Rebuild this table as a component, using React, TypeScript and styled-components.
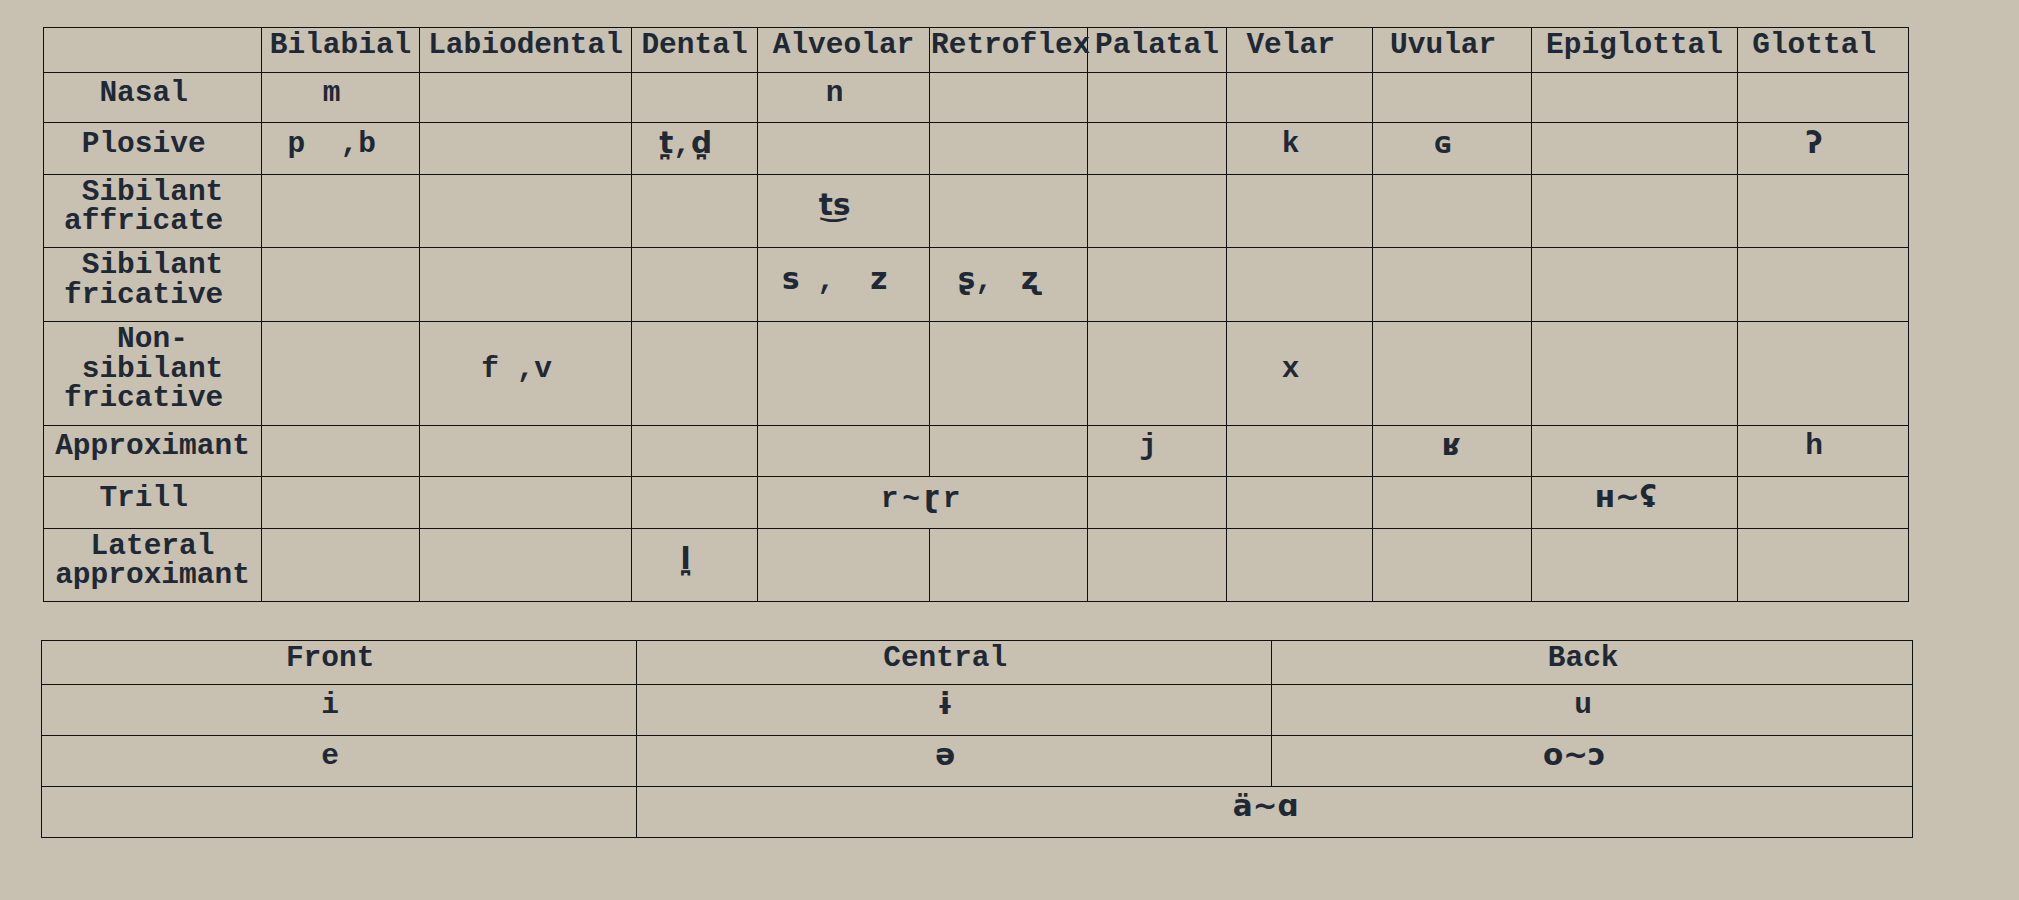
import React from "react";
import styled, { createGlobalStyle } from "styled-components";

const GlobalStyle = createGlobalStyle`
  html, body {
    margin: 0;
    padding: 0;
    background: #c8c0b0;
  }
  body {
    font-family: "Liberation Mono", "Courier New", monospace;
    color: #1e2935;
  }
`;

const Page = styled.main`
  display: flex;
  flex-direction: column;
  align-items: flex-start;
  gap: 38px;
  padding-top: 27px;
  min-height: 900px;
  box-sizing: border-box;
`;

const Table = styled.table<{ $w: number; $x: number }>`
  border-collapse: collapse;
  table-layout: fixed;
  width: ${(p) => p.$w}px;
  margin-left: ${(p) => p.$x}px;
  font-family: "Liberation Mono", "Courier New", monospace;
  font-weight: bold;
  font-size: 29.5px;
  line-height: 29.5px;
  color: #1e2935;
`;

const Row = styled.tr<{ $h: number }>`
  height: ${(p) => p.$h}px;
`;

const Cell = styled.td`
  border: 1px solid #111;
  padding: 2.5px 1px 10.5px;
  text-align: center;
  vertical-align: middle;
  white-space: nowrap;
  font-weight: bold;
`;

const Sans = styled.span`
  font-family: "DejaVu Sans", "Noto Sans", sans-serif;
  font-weight: bold;
`;

const Spaced = styled.span`
  letter-spacing: 4px;
`;

const NB = "\u00a0";

type Spec = { c?: React.ReactNode; span?: number };

const consonantCols = [218, 158, 212, 126, 172, 158, 139, 146, 159, 206, 171];
const places = [
  "Bilabial",
  "Labiodental",
  "Dental",
  "Alveolar",
  "Retroflex",
  "Palatal",
  "Velar" + NB,
  "Uvular" + NB,
  "Epiglottal",
  "Glottal" + NB,
];

const E: Spec = {};

const consonantRows: { label: React.ReactNode; h: number; cells: Spec[] }[] = [
  {
    label: <>Nasal{NB}</>,
    h: 50,
    cells: [{ c: "m" + NB }, E, E, { c: "n" + NB }, E, E, E, E, E, E],
  },
  {
    label: <>Plosive{NB}</>,
    h: 52,
    cells: [
      { c: `p${NB}${NB},b${NB}` },
      E,
      {
        c: (
          <>
            <Sans>t̪</Sans>,<Sans>d̪</Sans>
            {NB}
          </>
        ),
      },
      E,
      E,
      E,
      { c: "k" + NB },
      { c: <><Sans>ɢ</Sans>{NB}</> },
      E,
      { c: <><Sans>ʔ</Sans>{NB}</> },
    ],
  },
  {
    label: (
      <>
        Sibilant
        <br />
        affricate{NB}
      </>
    ),
    h: 73,
    cells: [E, E, E, { c: <><Sans>t͜s</Sans>{NB}</> }, E, E, E, E, E, E],
  },
  {
    label: (
      <>
        Sibilant
        <br />
        fricative{NB}
      </>
    ),
    h: 74,
    cells: [
      E,
      E,
      E,
      { c: <><Sans>s</Sans>{NB},{NB}{NB}<Sans>z</Sans>{NB}</> },
      { c: <><Sans>ʂ</Sans>,{NB}<Sans>{NB}ʐ</Sans>{NB}</> },
      E,
      E,
      E,
      E,
      E,
    ],
  },
  {
    label: (
      <>
        Non-
        <br />
        sibilant
        <br />
        fricative{NB}
      </>
    ),
    h: 104,
    cells: [E, { c: `f${NB},v${NB}` }, E, E, E, E, { c: "x" + NB }, E, E, E],
  },
  {
    label: <>Approximant</>,
    h: 51,
    cells: [E, E, E, E, E, { c: "j" + NB }, E, { c: <Sans>ʁ</Sans> }, E, { c: "h" + NB }],
  },
  {
    label: <>Trill{NB}</>,
    h: 52,
    cells: [
      E,
      E,
      E,
      {
        c: (
          <Spaced>
            r~<Sans>ɽ</Sans>r
          </Spaced>
        ),
        span: 2,
      },
      E,
      E,
      E,
      { c: <><Sans>ʜ~ʢ</Sans>{NB}</> },
      E,
    ],
  },
  {
    label: (
      <>
        Lateral
        <br />
        approximant
      </>
    ),
    h: 73,
    cells: [E, E, { c: <><Sans>l̪</Sans>{NB}</> }, E, E, E, E, E, E, E],
  },
];

const vowelCols = [595, 635, 641];
const vowelRows: { h: number; cells: Spec[] }[] = [
  { h: 51, cells: [{ c: "i" + NB }, { c: <><Sans>ɨ</Sans>{NB}</> }, { c: "u" + NB }] },
  {
    h: 51,
    cells: [
      { c: "e" + NB },
      { c: <><Sans>ə</Sans>{NB}</> },
      { c: <><Sans>o~ɔ</Sans>{NB}{NB}</> },
    ],
  },
  { h: 51, cells: [E, { c: <><Sans>ä~ɑ</Sans>{NB}</>, span: 2 }] },
];

function renderCells(cells: Spec[]) {
  return cells.map((s, i) => (
    <Cell key={i} colSpan={s.span}>
      {s.c}
    </Cell>
  ));
}

export default function App() {
  return (
    <>
      <GlobalStyle />
      <Page>
        <Table $w={1865} $x={43}>
          <colgroup>
            {consonantCols.map((w, i) => (
              <col key={i} style={{ width: w }} />
            ))}
          </colgroup>
          <thead>
            <Row $h={45}>
              <Cell as="th" />
              {places.map((p) => (
                <Cell as="th" key={p}>
                  {p}
                </Cell>
              ))}
            </Row>
          </thead>
          <tbody>
            {consonantRows.map((r, i) => (
              <Row $h={r.h} key={i}>
                <Cell as="th">{r.label}</Cell>
                {renderCells(r.cells)}
              </Row>
            ))}
          </tbody>
        </Table>
        <Table $w={1871} $x={41}>
          <colgroup>
            {vowelCols.map((w, i) => (
              <col key={i} style={{ width: w }} />
            ))}
          </colgroup>
          <thead>
            <Row $h={43}>
              <Cell as="th">Front{NB}</Cell>
              <Cell as="th">Central{NB}</Cell>
              <Cell as="th">Back{NB}</Cell>
            </Row>
          </thead>
          <tbody>
            {vowelRows.map((r, i) => (
              <Row $h={r.h} key={i}>
                {renderCells(r.cells)}
              </Row>
            ))}
          </tbody>
        </Table>
      </Page>
    </>
  );
}
